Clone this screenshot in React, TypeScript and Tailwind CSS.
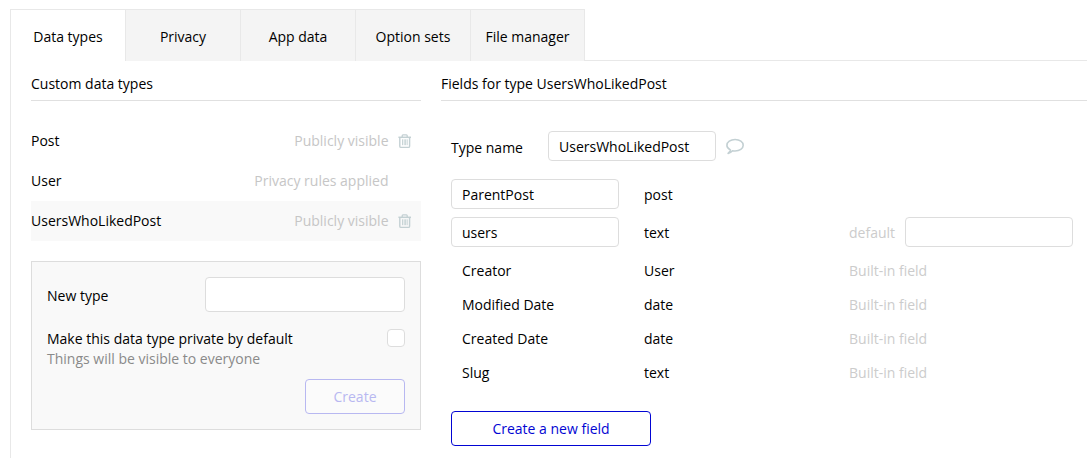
import React from "react";

const tabs = ["Data types", "Privacy", "App data", "Option sets", "File manager"];

const types = [
  { name: "Post", access: "Publicly visible", removable: true },
  { name: "User", access: "Privacy rules applied", removable: false },
  { name: "UsersWhoLikedPost", access: "Publicly visible", removable: true },
];

const builtIns = [
  { name: "Creator", type: "User" },
  { name: "Modified Date", type: "date" },
  { name: "Created Date", type: "date" },
  { name: "Slug", type: "text" },
];

function TrashIcon() {
  return (
    <svg width="14" height="16" viewBox="0 0 14 16" fill="none" stroke="#c3d0d3" className="block">
      <path d="M0.4 4.3H13" strokeWidth="1.5" />
      <path d="M4.2 4V2.8Q4.2 1.9 5 1.9H8.4Q9.2 1.9 9.2 2.8V4" strokeWidth="1.3" />
      <path d="M1.8 4.5V13.2Q1.8 14.4 3 14.4H10.4Q11.6 14.4 11.6 13.2V4.5" strokeWidth="1.4" />
      <path d="M4.5 6.3V12.2M6.2 6.3V12.2M7.6 6.3V12.2M9.2 6.3V12.2" strokeWidth="0.9" />
    </svg>
  );
}

function CommentIcon() {
  return (
    <svg width="18" height="17" viewBox="0 0 18 17" fill="none" stroke="#c3d0d3" strokeWidth="1.6" strokeLinejoin="round" className="block">
      <path d="M4.4 11.9C2.2 10.9 0.9 9.2 0.9 7.3C0.9 4 4.5 1.5 9.1 1.5S17.2 4 17.2 7.3S13.6 13 9.1 13C8.2 13 7.3 12.9 6.5 12.7C5.4 14 3.9 14.9 2.1 15.4C3.4 14.3 4.2 13.2 4.4 11.9Z" />
    </svg>
  );
}

function Field({ value = "", label }: { value?: string; label: string }) {
  return (
    <input
      aria-label={label}
      defaultValue={value}
      className="h-[30px] w-[168px] shrink-0 rounded-[4px] border border-[#dddddd] bg-white px-2.5 text-black outline-none"
    />
  );
}

export default function App() {
  return (
    <div className="h-[458px] w-full overflow-hidden bg-white pt-[9px] pl-2.5 font-['Open_Sans','Noto_Sans',sans-serif] text-[14px] leading-5 text-black">
      <nav className="flex h-[52px]">
        {tabs.map((tab, i) => (
          <button
            key={tab}
            className={
              i === 0
                ? "w-[115px] border-t border-l border-[#e8e8e8] bg-white pt-0.5"
                : i === 4
                  ? "w-[115px] border-x border-t border-[#e8e8e8] bg-[#f4f4f4] pt-0.5"
                  : "w-[115px] border-t border-l border-[#e8e8e8] bg-[#f4f4f4] pt-0.5"
            }
          >
            {tab}
          </button>
        ))}
        <div className="flex-1 border-b border-[#e8e8e8]" />
      </nav>

      <main className="flex h-[397px] gap-5 border-l border-[#e8e8e8] pl-5">
        <section className="w-[390px] shrink-0">
          <h2 className="h-10 border-b border-[#e0e0e0] pt-[13px]">Custom data types</h2>
          <ul className="mt-5">
            {types.map((t, i) => (
              <li key={t.name} className={i === 2 ? "flex h-10 items-center bg-[#f9f9f9]" : "flex h-10 items-center"}>
                <span className="flex-1">{t.name}</span>
                <span className="text-[#c6c6c6]">{t.access}</span>
                <span className="ml-[9.5px] w-[23px]">{t.removable && <TrashIcon />}</span>
              </li>
            ))}
          </ul>
          <div className="mt-5 h-[169px] border border-[#dddddd] bg-[#f9f9f9] p-[15px]">
            <div className="flex h-[35px] items-center justify-between">
              <span className="pt-0.5">New type</span>
              <input aria-label="New type" className="h-[35px] w-[200px] rounded-[4px] border border-[#dddddd] bg-white px-2.5 outline-none" />
            </div>
            <div className="mt-[17px] flex justify-between">
              <div>
                <p>Make this data type private by default</p>
                <p className="text-[#8a8a8a]">Things will be visible to everyone</p>
              </div>
              <span role="checkbox" aria-checked="false" className="size-[18px] rounded-[4px] border border-[#dddddd] bg-white" />
            </div>
            <div className="mt-2.5 flex justify-end">
              <button className="h-[35px] w-[100px] rounded-[4px] border border-[#b8b8f1] bg-[#fbfbfb] text-[#b8b8f1]">Create</button>
            </div>
          </div>
        </section>

        <section className="min-w-0 flex-1">
          <h2 className="h-10 border-b border-[#e0e0e0] pt-[13px]">Fields for type UsersWhoLikedPost</h2>
          <div className="pt-[30px] pl-2.5">
            <div className="flex h-[30px] items-center">
              <span className="w-[97px] pt-[3px]">Type name</span>
              <Field label="Type name" value="UsersWhoLikedPost" />
              <span className="ml-2.5">
                <CommentIcon />
              </span>
            </div>
            <div className="mt-[18px] flex h-[30px] items-center">
              <Field label="Field name" value="ParentPost" />
              <span className="ml-[25px] pt-px">post</span>
            </div>
            <div className="mt-2 flex h-[30px] items-center">
              <Field label="Field name" value="users" />
              <span className="ml-[25px] w-[205px] pt-px">text</span>
              <span className="w-14 pt-px text-[#cccccc]">default</span>
              <Field label="Default value" />
            </div>
            <div className="mt-[7px]">
              {builtIns.map((f) => (
                <div key={f.name} className="flex h-[34px] items-center pl-[11px]">
                  <span className="w-[182px]">{f.name}</span>
                  <span className="w-[205px]">{f.type}</span>
                  <span className="text-[#cccccc]">Built-in field</span>
                </div>
              ))}
            </div>
            <button className="mt-[21px] h-[35px] w-[200px] rounded-[4px] border border-[#0205d3] text-[#0205d3]">
              Create a new field
            </button>
          </div>
        </section>
      </main>
    </div>
  );
}
